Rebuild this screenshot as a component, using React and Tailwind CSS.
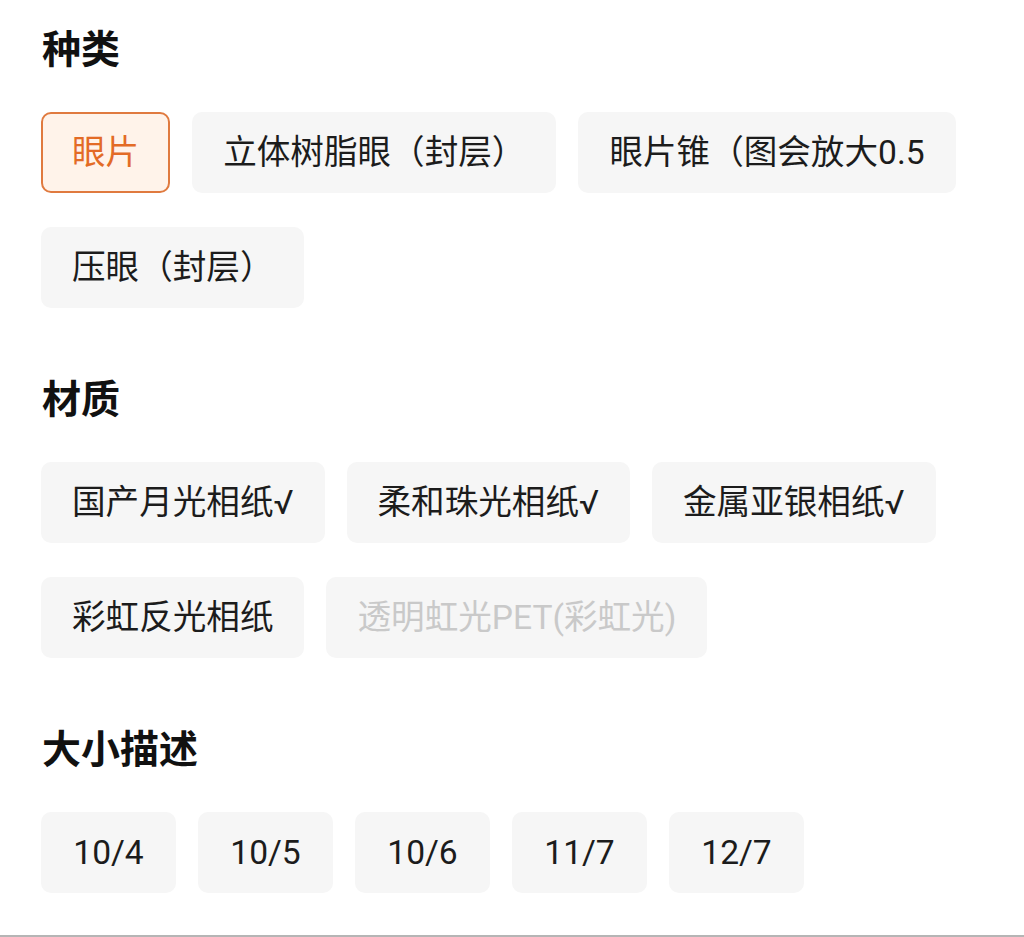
import React from "react";

const font = { fontFamily: "Roboto, 'Noto Sans CJK SC', sans-serif" };

function Chip({ label, selected, disabled, size }) {
  let cls =
    "h-[81px] flex items-center rounded-[10px] border-2 text-[33.6px] leading-none whitespace-nowrap ";
  cls += size ? "w-[135px] justify-center " : "px-[29px] ";
  if (selected) cls += "border-[#e07a3f] bg-[#fff3ea] text-[#e36b26]";
  else if (disabled) cls += "border-transparent bg-[#f6f6f6] text-[#c9c9c9]";
  else cls += "border-transparent bg-[#f6f6f6] text-[#1c1c1c]";
  return <div className={cls}>{label}</div>;
}

function Section({ title, items, first }) {
  return (
    <div className={first ? "pt-[25px]" : "mt-[67px]"}>
      <div className="h-[50px] flex items-center text-[39px] font-bold text-[#111111] leading-none pl-[1px]">
        {title}
      </div>
      <div className="mt-[37px] flex flex-wrap gap-x-[22px] gap-y-[34px]">
        {items.map((it, i) => (
          <Chip key={i} {...it} />
        ))}
      </div>
    </div>
  );
}

export default function App() {
  return (
    <div className="w-[1024px] h-[937px] bg-white flex flex-col" style={font}>
      <div className="px-[41px]">
        <Section
          first
          title="种类"
          items={[
            { label: "眼片", selected: true },
            { label: "立体树脂眼（封层）" },
            { label: "眼片锥（图会放大0.5" },
            { label: "压眼（封层）" },
          ]}
        />
        <Section
          title="材质"
          items={[
            { label: "国产月光相纸√" },
            { label: "柔和珠光相纸√" },
            { label: "金属亚银相纸√" },
            { label: "彩虹反光相纸" },
            { label: "透明虹光PET(彩虹光)", disabled: true },
          ]}
        />
        <Section
          title="大小描述"
          items={[
            { label: "10/4", size: true },
            { label: "10/5", size: true },
            { label: "10/6", size: true },
            { label: "11/7", size: true },
            { label: "12/7", size: true },
          ]}
        />
      </div>
      <div className="mt-auto h-[2px] bg-[#b5b5b5]" />
    </div>
  );
}
